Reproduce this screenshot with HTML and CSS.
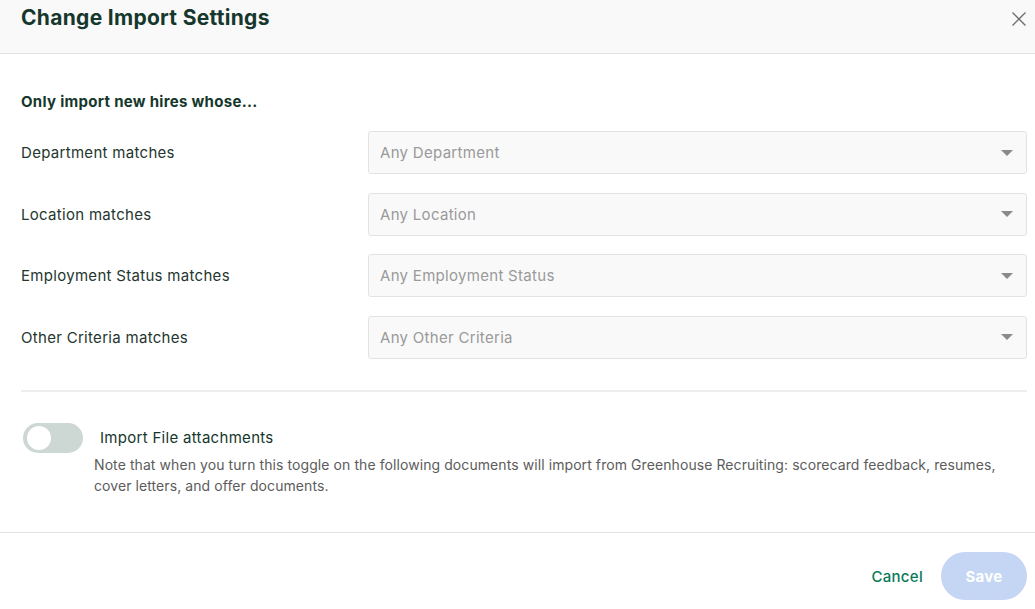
FILE: index.html
```html
<!DOCTYPE html>
<html>
<head>
<meta charset="utf-8">
<link rel="stylesheet" href="styles.css">
</head>
<body>
<div class="modal">
  <div class="header">
    <h1 class="title">Change Import Settings</h1>
    <button class="close" aria-label="Close">
      <svg width="16" height="16" viewBox="0 0 16 16"><path d="M1.5 1.5 L14.5 14.5 M14.5 1.5 L1.5 14.5" stroke="#707070" stroke-width="1.4" fill="none"/></svg>
    </button>
  </div>
  <div class="body">
    <div class="section-title">Only import new hires whose...</div>
    <div class="rows">
      <div class="row"><div class="label">Department matches</div><div class="select"><span>Any Department</span><span class="caret"></span></div></div>
      <div class="row"><div class="label">Location matches</div><div class="select"><span>Any Location</span><span class="caret"></span></div></div>
      <div class="row"><div class="label">Employment Status matches</div><div class="select"><span>Any Employment Status</span><span class="caret"></span></div></div>
      <div class="row"><div class="label">Other Criteria matches</div><div class="select"><span>Any Other Criteria</span><span class="caret"></span></div></div>
    </div>
    <div class="divider"></div>
    <div class="toggle-row">
      <div class="toggle"><div class="knob"></div></div>
      <div class="toggle-text">
        <div class="toggle-label">Import File attachments</div>
        <div class="note">Note that when you turn this toggle on the following documents will import from Greenhouse Recruiting: scorecard feedback, resumes, cover letters, and offer documents.</div>
      </div>
    </div>
  </div>
  <div class="footer">
    <button class="cancel">Cancel</button>
    <button class="save">Save</button>
  </div>
</div>
</body>
</html>
```
FILE: styles.css
```css
* { box-sizing: border-box; }
body { margin: 0; background: #fff; font-family: "Inter", "Liberation Sans", sans-serif; letter-spacing: 0.3px; }
.modal { width: 1035px; height: 609px; display: flex; flex-direction: column; overflow: hidden; }
.header { height: 54px; flex: none; background: #f9f9f9; border-bottom: 1px solid #e3e3e3; display: flex; justify-content: space-between; align-items: flex-start; padding: 5px 8px 0 21px; }
.title { margin: 0; font-size: 21px; line-height: 26px; font-weight: 700; color: #15372c; letter-spacing: 0.3px; }
.close { border: 0; background: none; padding: 0; margin: 6px 0 0 0; width: 16px; height: 16px; }
.close svg { display: block; }
.body { padding: 38px 8px 0 21px; flex: none; height: 478px; }
.section-title { font-size: 15px; font-weight: 700; color: #15372c; line-height: 20px; }
.rows { margin-top: 19px; display: flex; flex-direction: column; gap: 18.5px; }
.row { display: flex; align-items: center; }
.label { width: 347px; font-size: 15px; color: #24362e; }
.select { flex: 1; height: 43px; border: 1px solid #e3e3e3; border-radius: 3px; background: #f9f9f9; display: flex; align-items: center; justify-content: space-between; padding: 0 13px 0 11px; font-size: 15px; color: #9a9a9a; }
.caret { width: 0; height: 0; border-left: 6px solid transparent; border-right: 6px solid transparent; border-top: 6px solid #8a8a8a; }
.divider { margin-top: 31px; height: 2px; background: #eeeeee; }
.toggle-row { display: flex; margin-top: 31px; }
.toggle { width: 60px; height: 30px; border-radius: 15px; background: #cdd7d3; margin: 0 0 0 2px; position: relative; flex: none; }
.knob { position: absolute; left: 4px; top: 3px; width: 24px; height: 24px; border-radius: 50%; background: #fff; }
.toggle-text { margin-left: 11px; }
.toggle-label { font-size: 15px; color: #15372c; line-height: 20px; margin: 5px 0 0 6px; }
.note { font-size: 14px; color: #5c5c5c; line-height: 21px; margin-top: 6px; letter-spacing: 0.08px; }
.footer { flex: 1; border-top: 1px solid #e3e3e3; display: flex; justify-content: flex-end; align-items: flex-start; padding: 19px 8px 0 0; }
.cancel { border: 0; background: none; font: inherit; font-size: 15px; font-weight: 500; color: #0a7a56; padding: 0; margin: 15px 18px 0 0; letter-spacing: 0.3px; }
.save { border: 0; width: 86px; height: 48px; border-radius: 24px; background: #c4d6f3; color: #fff; font: inherit; font-size: 15px; font-weight: 700; letter-spacing: 0.3px; }
```
